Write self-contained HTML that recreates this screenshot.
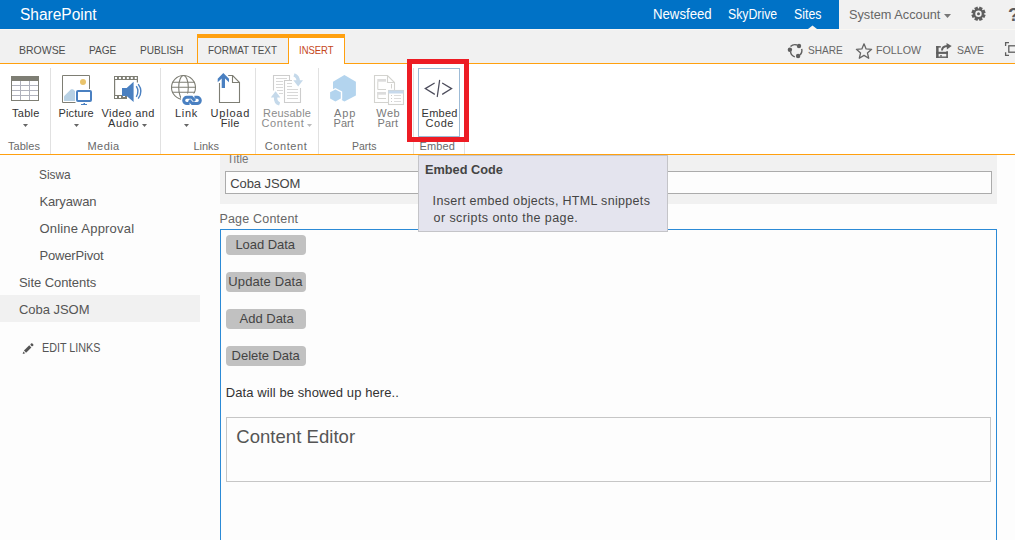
<!DOCTYPE html>
<html><head><meta charset="utf-8"><style>
html,body{margin:0;padding:0}
body{width:1015px;height:540px;overflow:hidden;position:relative;background:#fdfdfd;font-family:"Liberation Sans",sans-serif}
.t{position:absolute;white-space:nowrap;line-height:normal}
svg{display:block}
</style></head><body>
<div style="position:absolute;left:0px;top:0px;width:1015px;height:64px;background:#f1f1f1"></div><div style="position:absolute;left:0px;top:0px;width:839px;height:29px;background:#0072c6"></div><div style="position:absolute;left:0px;top:29px;width:1015px;height:1px;background:#f9f7f3"></div><svg style="position:absolute;left:808px;top:25px;" width="9" height="4" viewBox="0 0 9 4"><polygon points="0,4 4.5,0.5 9,4" fill="#f7f5f1"/></svg><div style="position:absolute;left:220px;top:155px;width:777px;height:49px;background:#f1f1f1"></div><div class="t" style="left:227.0px;top:151.0px;font-size:13px;font-weight:400;color:#777;transform:scaleX(0.8875);transform-origin:0 0">Title</div><div style="position:absolute;left:0px;top:64px;width:1015px;height:90px;background:#fff"></div><div style="position:absolute;left:0px;top:63px;width:1015px;height:1px;background:#ffa00f"></div><div style="position:absolute;left:0px;top:154px;width:1015px;height:1px;background:#ffa00f"></div><div style="position:absolute;left:197px;top:34px;width:148px;height:4px;background:#ffa00f"></div><div style="position:absolute;left:197px;top:34px;width:1px;height:30px;background:#ffa00f"></div><div style="position:absolute;left:344px;top:34px;width:1px;height:30px;background:#ffa00f"></div><div style="position:absolute;left:288px;top:38px;width:1px;height:26px;background:#ffa00f"></div><div style="position:absolute;left:289px;top:38px;width:55px;height:26px;background:#fff"></div><div style="position:absolute;left:50px;top:68px;width:1px;height:86px;background:#e1e1e1"></div><div style="position:absolute;left:160px;top:68px;width:1px;height:86px;background:#e1e1e1"></div><div style="position:absolute;left:255px;top:68px;width:1px;height:86px;background:#e1e1e1"></div><div style="position:absolute;left:318px;top:68px;width:1px;height:86px;background:#e1e1e1"></div><div style="position:absolute;left:413px;top:68px;width:1px;height:86px;background:#e1e1e1"></div><div style="position:absolute;left:464px;top:68px;width:1px;height:86px;background:#e1e1e1"></div><div style="position:absolute;left:0px;top:295px;width:200px;height:27px;background:#f1f1f1"></div><div style="position:absolute;left:225px;top:171px;width:767px;height:23px;box-sizing:border-box;border:1px solid #ababab;background:#fdfdfd"></div><div style="position:absolute;left:220px;top:229px;width:777px;height:320px;box-sizing:border-box;border:1px solid #2b8ad6;"></div><div style="position:absolute;left:226px;top:235px;width:80px;height:20px;background:#c1c1c1;border-radius:4px"></div><div style="position:absolute;left:226px;top:272px;width:80px;height:20px;background:#c1c1c1;border-radius:4px"></div><div style="position:absolute;left:226px;top:309px;width:80px;height:20px;background:#c1c1c1;border-radius:4px"></div><div style="position:absolute;left:226px;top:346px;width:80px;height:20px;background:#c1c1c1;border-radius:4px"></div><div style="position:absolute;left:226px;top:417px;width:765px;height:65px;box-sizing:border-box;border:1px solid #c6c6c6"></div><div class="t" style="left:19.53px;top:5.7px;font-size:16px;font-weight:400;color:#fff;transform:scaleX(0.9679);transform-origin:0 0">SharePoint</div><div class="t" style="left:653.46px;top:6.1px;font-size:14px;font-weight:400;color:#fff;transform:scaleX(0.9426);transform-origin:0 0">Newsfeed</div><div class="t" style="left:728.42px;top:6.1px;font-size:14px;font-weight:400;color:#fff;transform:scaleX(0.8764);transform-origin:0 0">SkyDrive</div><div class="t" style="left:794.42px;top:6.1px;font-size:14px;font-weight:400;color:#fff;transform:scaleX(0.88);transform-origin:0 0">Sites</div><div class="t" style="left:849.46px;top:7.0px;font-size:13.5px;font-weight:400;color:#666;transform:scaleX(0.9438);transform-origin:0 0">System Account</div><div class="t" style="left:19.29px;top:44.0px;font-size:11.5px;font-weight:400;color:#4e4e4e;transform:scaleX(0.912);transform-origin:0 0">BROWSE</div><div class="t" style="left:89.32px;top:44.0px;font-size:11.5px;font-weight:400;color:#4e4e4e;transform:scaleX(0.88);transform-origin:0 0">PAGE</div><div class="t" style="left:140.42px;top:44.0px;font-size:11.5px;font-weight:400;color:#4e4e4e;transform:scaleX(0.8812);transform-origin:0 0">PUBLISH</div><div class="t" style="left:207.54px;top:44.0px;font-size:11.5px;font-weight:400;color:#4e4e4e;transform:scaleX(0.8633);transform-origin:0 0">FORMAT TEXT</div><div class="t" style="left:298.88px;top:44.0px;font-size:11.5px;font-weight:400;color:#c5471a;transform:scaleX(0.822);transform-origin:0 0">INSERT</div><div class="t" style="left:807.62px;top:44.0px;font-size:11.5px;font-weight:400;color:#666;transform:scaleX(0.8763);transform-origin:0 0">SHARE</div><div class="t" style="left:876.27px;top:44.0px;font-size:11.5px;font-weight:400;color:#666;transform:scaleX(0.9271);transform-origin:0 0">FOLLOW</div><div class="t" style="left:956.69px;top:44.0px;font-size:11.5px;font-weight:400;color:#666;transform:scaleX(0.9071);transform-origin:0 0">SAVE</div><div class="t" style="left:12.0px;top:107.0px;font-size:11px;font-weight:400;color:#333;letter-spacing:0.275px">Table</div><div class="t" style="left:58.6px;top:107.0px;font-size:11px;font-weight:400;color:#333;letter-spacing:0.116px">Picture</div><div class="t" style="left:101.5px;top:107.0px;font-size:11px;font-weight:400;color:#333;letter-spacing:0.45px">Video and</div><div class="t" style="left:108.0px;top:116.5px;font-size:11px;font-weight:400;color:#333;letter-spacing:0.625px">Audio</div><div class="t" style="left:175.0px;top:107.0px;font-size:11px;font-weight:400;color:#333;letter-spacing:0.667px">Link</div><div class="t" style="left:210.5px;top:107.0px;font-size:11px;font-weight:400;color:#333;letter-spacing:0.8px">Upload</div><div class="t" style="left:220.7px;top:116.5px;font-size:11px;font-weight:400;color:#333;letter-spacing:0.333px">File</div><div class="t" style="left:263.0px;top:107.0px;font-size:11px;font-weight:400;color:#8c8c8c;letter-spacing:0.214px">Reusable</div><div class="t" style="left:261.4px;top:116.5px;font-size:11px;font-weight:400;color:#8c8c8c;letter-spacing:0.633px">Content</div><div class="t" style="left:334.0px;top:107.0px;font-size:11px;font-weight:400;color:#7a7a7a;letter-spacing:0.85px">App</div><div class="t" style="left:333.5px;top:116.5px;font-size:11px;font-weight:400;color:#7a7a7a;letter-spacing:0.066px">Part</div><div class="t" style="left:376.3px;top:107.0px;font-size:11px;font-weight:400;color:#7a7a7a;letter-spacing:0.45px">Web</div><div class="t" style="left:377.6px;top:116.5px;font-size:11px;font-weight:400;color:#7a7a7a;letter-spacing:0.099px">Part</div><div class="t" style="left:421.6px;top:107.0px;font-size:11px;font-weight:400;color:#333;letter-spacing:0.25px">Embed</div><div class="t" style="left:425.5px;top:116.5px;font-size:11px;font-weight:400;color:#333;letter-spacing:0.534px">Code</div><div class="t" style="left:8.0px;top:139.7px;font-size:11px;font-weight:400;color:#6a6a6a;letter-spacing:0.04px">Tables</div><div class="t" style="left:87.5px;top:139.7px;font-size:11px;font-weight:400;color:#6a6a6a;letter-spacing:0.425px">Media</div><div class="t" style="left:193.4px;top:139.7px;font-size:11px;font-weight:400;color:#6a6a6a;letter-spacing:0.0px">Links</div><div class="t" style="left:264.7px;top:139.7px;font-size:11px;font-weight:400;color:#6a6a6a;letter-spacing:0.599px">Content</div><div class="t" style="left:351.55px;top:139.7px;font-size:11px;font-weight:400;color:#6a6a6a;transform:scaleX(0.952);transform-origin:0 0">Parts</div><div class="t" style="left:419.6px;top:139.7px;font-size:11px;font-weight:400;color:#6a6a6a;letter-spacing:0.075px">Embed</div><div class="t" style="left:39.49px;top:167.0px;font-size:13px;font-weight:400;color:#555;transform:scaleX(0.9147);transform-origin:0 0">Siswa</div><div class="t" style="left:39.4px;top:194.0px;font-size:13px;font-weight:400;color:#555;letter-spacing:-0.101px">Karyawan</div><div class="t" style="left:39.4px;top:221.0px;font-size:13px;font-weight:400;color:#555;letter-spacing:0.207px">Online Approval</div><div class="t" style="left:39.4px;top:248.0px;font-size:13px;font-weight:400;color:#555;letter-spacing:-0.156px">PowerPivot</div><div class="t" style="left:19.0px;top:275.0px;font-size:13px;font-weight:400;color:#555;letter-spacing:-0.067px">Site Contents</div><div class="t" style="left:19.0px;top:302.0px;font-size:13px;font-weight:400;color:#555;letter-spacing:-0.036px">Coba JSOM</div><div class="t" style="left:41.7px;top:341.4px;font-size:12px;font-weight:400;color:#555;transform:scaleX(0.8969);transform-origin:0 0">EDIT LINKS</div><div class="t" style="left:230.3px;top:176.0px;font-size:13px;font-weight:400;color:#444;letter-spacing:-0.1px">Coba JSOM</div><div class="t" style="left:219.4px;top:211.6px;font-size:12.5px;font-weight:400;color:#666;letter-spacing:0.199px">Page Content</div><div class="t" style="left:235.4px;top:236.6px;font-size:13px;font-weight:400;color:#444;letter-spacing:-0.05px">Load Data</div><div class="t" style="left:228.3px;top:274.0px;font-size:13px;font-weight:400;color:#444;letter-spacing:0.12px">Update Data</div><div class="t" style="left:239.5px;top:310.8px;font-size:13px;font-weight:400;color:#444;letter-spacing:0.0px">Add Data</div><div class="t" style="left:231.6px;top:347.7px;font-size:13px;font-weight:400;color:#444;letter-spacing:-0.04px">Delete Data</div><div class="t" style="left:225.7px;top:385.0px;font-size:13px;font-weight:400;color:#333;letter-spacing:0.096px">Data will be showed up here..</div><div class="t" style="left:236.3px;top:425.8px;font-size:18.5px;font-weight:400;color:#555;letter-spacing:0.038px">Content Editor</div><svg style="position:absolute;left:23px;top:124px;" width="5" height="3" viewBox="0 0 5 3"><polygon points="0,0 5,0 2.5,3" fill="#666"/></svg><svg style="position:absolute;left:74px;top:124px;" width="5" height="3" viewBox="0 0 5 3"><polygon points="0,0 5,0 2.5,3" fill="#666"/></svg><svg style="position:absolute;left:142px;top:124px;" width="5" height="3" viewBox="0 0 5 3"><polygon points="0,0 5,0 2.5,3" fill="#666"/></svg><svg style="position:absolute;left:184px;top:124px;" width="5" height="3" viewBox="0 0 5 3"><polygon points="0,0 5,0 2.5,3" fill="#666"/></svg><svg style="position:absolute;left:307px;top:124px;" width="5" height="3" viewBox="0 0 5 3"><polygon points="0,0 5,0 2.5,3" fill="#bbb"/></svg><svg style="position:absolute;left:944px;top:14px;" width="7" height="4" viewBox="0 0 7 4"><polygon points="0,0 7,0 3.5,4" fill="#777"/></svg><svg style="position:absolute;left:11px;top:76px;" width="28" height="25" viewBox="0 0 28 25"><rect x="0.5" y="0.5" width="27" height="24" fill="#fff" stroke="#7e7e74"/><rect x="0" y="0" width="28" height="5" fill="#7e7e74"/><path d="M9.5 5V24M18.5 5V24M1 9.5H27M1 14.5H27M1 19.5H27" stroke="#b0b2bd" stroke-width="1"/></svg><svg style="position:absolute;left:60px;top:72px" width="36" height="36" viewBox="60 72 36 36"><path d="M75.5 102.5H62.5V75.5H89.5V89" fill="none" stroke="#7e7e74"/><circle cx="83" cy="81.9" r="3" fill="#eac46c"/><polygon points="64,101 64,96.3 71,89.2 73,89.2 75,91 75,101" fill="#b8d1e4"/><rect x="77" y="91" width="14" height="10" rx="1" fill="#fff" stroke="#4a80c1" stroke-width="2"/><rect x="81" y="104" width="6" height="1" fill="#4a80c1"/><rect x="83.5" y="103" width="1.5" height="1" fill="#4a80c1"/></svg><svg style="position:absolute;left:110px;top:72px" width="36" height="34" viewBox="110 72 36 34"><rect x="114" y="76" width="24" height="4" fill="#7e7e74"/><rect x="115.00" y="77" width="2" height="2" fill="#fff"/><rect x="118.95" y="77" width="2" height="2" fill="#fff"/><rect x="122.90" y="77" width="2" height="2" fill="#fff"/><rect x="126.85" y="77" width="2" height="2" fill="#fff"/><rect x="130.80" y="77" width="2" height="2" fill="#fff"/><rect x="134.75" y="77" width="2" height="2" fill="#fff"/><path d="M114.6 80V99M137.4 80V82.5" stroke="#7e7e74" stroke-width="1.2"/><rect x="114" y="95" width="13" height="4" fill="#7e7e74"/><rect x="115" y="96" width="2" height="2" fill="#fff"/><rect x="119" y="96" width="2" height="2" fill="#fff"/><rect x="123" y="96" width="2" height="1" fill="#fff"/><polygon points="122,88 126.7,88 133.6,81.8 133.6,101.9 126.7,95.9 122,95.9" fill="#4a80c1"/><path d="M136.3 86.2 Q139.6 91.5 136.3 96.8" fill="none" stroke="#4a80c1" stroke-width="1.4"/><path d="M138.2 84.2 Q143.6 91.5 138.2 98.7" fill="none" stroke="#4a80c1" stroke-width="1.4"/></svg><svg style="position:absolute;left:168px;top:72px" width="38" height="36" viewBox="168 72 38 36"><defs><clipPath id="gc"><polygon points="160,60 215,60 215,93.6 181,93.6 181,108 160,108"/></clipPath></defs><g clip-path="url(#gc)" fill="none" stroke="#7e7e74" stroke-width="1.1"><circle cx="183.5" cy="87.5" r="12"/><ellipse cx="183.5" cy="87.5" rx="4.8" ry="12"/><path d="M172 82.3H195M171.5 87.3H195.5M172 92.3H195"/></g><path d="M181 94.5H204V107H181Z" fill="#fff"/><g fill="none" stroke="#4a80c1" stroke-width="3"><path d="M195 100.9L191.7 97.3H186.8A3.1 3.1 0 0 0 186.8 103.5H189.6"/><path d="M189 100.1L192.3 103.5H197.2A3.1 3.1 0 0 0 197.2 97.3H194.4"/></g></svg><svg style="position:absolute;left:213px;top:70px" width="32" height="36" viewBox="213 70 32 36"><path d="M219.5 83V102.5H239.5V82.5L232.7 75.5H228.2M232.5 75.5V82.5H239.5" fill="none" stroke="#7e7e74" stroke-width="1.1"/><polygon points="223.3,73 229,78.7 229,82.3 225,78.4 225,88 221.7,88 221.7,78.4 217.7,82.3 217.7,78.7" fill="#4a80c1"/></svg><svg style="position:absolute;left:265px;top:68px" width="45" height="40" viewBox="265 68 45 40"><path d="M273.5 90.5V75.5H289.5V80" fill="none" stroke="#cdcdcd" stroke-width="1.1"/><path d="M276 78.5H287M276 81.5H283M276 84.5H283M276 87.5H283M277 90.5H283M279 93.5H283" stroke="#d4d4d4" stroke-width="0.9"/><path d="M292 80.5H284.5V102.5H300.5V87" fill="#fff" stroke="#cdcdcd" stroke-width="1.1"/><path d="M287 83.5H296" stroke="#d4d4d4" stroke-width="0.9"/><path d="M287 86.5H296" stroke="#d4d4d4" stroke-width="0.9"/><path d="M287 89.5H298" stroke="#d4d4d4" stroke-width="0.9"/><path d="M287 92.5H298" stroke="#d4d4d4" stroke-width="0.9"/><path d="M287 95.5H298" stroke="#d4d4d4" stroke-width="0.9"/><path d="M287 98.5H298" stroke="#d4d4d4" stroke-width="0.9"/><path d="M292 72.5H305V88H292Z" fill="#fff"/><path d="M294 74.8Q298.3 76.2 298.2 81.5" fill="none" stroke="#c5d9ea" stroke-width="3.4"/><polygon points="293.3,80.3 303,80.3 298.2,86.6" fill="#c5d9ea"/><path d="M279.6 104Q275.2 102.6 275.6 97" fill="none" stroke="#c5d9ea" stroke-width="3.4"/><polygon points="270.8,97.6 280.4,97.6 275.6,91.2" fill="#c5d9ea"/></svg><svg style="position:absolute;left:326px;top:72px" width="36" height="34" viewBox="326 72 36 34"><polygon points="344.4,75.1 355.9,81.8 355.9,95.6 344.4,101.6 333,95 333,81.8" fill="#b3d4ee"/><polygon points="335.4,88.1 342.2,91.5 342.2,99.4 335.4,103 328.7,99.4 328.7,91.5" fill="#fff"/><polygon points="335.4,89.6 340.8,92.3 340.8,98.6 335.4,101.6 330.1,98.6 330.1,92.3" fill="#b3d4ee"/></svg><svg style="position:absolute;left:370px;top:72px" width="38" height="36" viewBox="370 72 38 36"><path d="M388 102.5H374.5V75.5H387.5L394.5 82.5V90M387.5 75.5V82.5H394.5" fill="none" stroke="#d3d3cf" stroke-width="1.1"/><rect x="377.3" y="79" width="8.7" height="2.7" fill="#dcdcdc"/><path d="M377.8 81.5V89.5H386M377.8 92V98.5H386M391.5 84V88.5" fill="none" stroke="#d3d3cf" stroke-width="1"/><rect x="377.3" y="92" width="8.7" height="2.7" fill="#dcdcdc"/><rect x="388.5" y="90.5" width="15" height="14" fill="#fff" stroke="#d3d3cf" stroke-width="1.1"/><rect x="388.5" y="90.5" width="15" height="3" fill="#c7d9ec"/><rect x="391" y="95" width="1" height="1" fill="#ccc"/><path d="M394 95.5H401" stroke="#d8d8d8" stroke-width="0.9"/><rect x="391" y="98" width="1" height="1" fill="#ccc"/><path d="M394 98.5H401" stroke="#d8d8d8" stroke-width="0.9"/><rect x="391" y="101" width="1" height="1" fill="#ccc"/><path d="M394 101.5H401" stroke="#d8d8d8" stroke-width="0.9"/></svg><svg style="position:absolute;left:420px;top:76px" width="38" height="26" viewBox="420 76 38 26"><g fill="none" stroke="#4d4d5c" stroke-width="1.25" stroke-linecap="round"><path d="M434.2 83.2L425.3 88.6L434.4 94.1M442.6 83.2L451.6 88.6L442.6 94.1M439.6 80.3L437.3 96.5"/></g></svg><svg style="position:absolute;left:784px;top:40px" width="24" height="22" viewBox="784 40 24 22"><g fill="none" stroke="#5f5f5f" stroke-width="1.4"><path d="M790.5 46.6A6.3 6.3 0 0 1 797 45"/><path d="M801.7 48.8A6.3 6.3 0 0 1 799.8 55"/><path d="M794.8 56.8A6.3 6.3 0 0 1 790.5 51.5"/></g><circle cx="799" cy="46" r="2.2" fill="#5f5f5f"/><circle cx="789.9" cy="49.8" r="2.2" fill="#5f5f5f"/><circle cx="798.1" cy="56" r="2.2" fill="#5f5f5f"/></svg><svg style="position:absolute;left:852px;top:40px" width="24" height="22" viewBox="852 40 24 22"><polygon points="864.00,43.80 866.12,48.89 871.61,49.33 867.42,52.91 868.70,58.27 864.00,55.40 859.30,58.27 860.58,52.91 856.39,49.33 861.88,48.89" fill="none" stroke="#666" stroke-width="1.3" stroke-linejoin="round"/></svg><svg style="position:absolute;left:930px;top:40px" width="24" height="22" viewBox="930 40 24 22"><rect x="936.1" y="46.1" width="2.5" height="11.8" fill="#5f5f5f"/><rect x="936.1" y="46.1" width="4.7" height="1.5" fill="#5f5f5f"/><rect x="936.1" y="51.8" width="11.8" height="2.1" fill="#5f5f5f"/><rect x="946.3" y="51.2" width="1.6" height="6.7" fill="#5f5f5f"/><rect x="936.1" y="56.5" width="11.8" height="1.4" fill="#5f5f5f"/><rect x="940.2" y="55.1" width="1.6" height="1.5" fill="#5f5f5f"/><path d="M942 50.6Q942 46.3 947.5 46.1" fill="none" stroke="#5f5f5f" stroke-width="2"/><polygon points="946.5,42.9 951.7,46 946.9,49.6" fill="#5f5f5f"/></svg><svg style="position:absolute;left:966px;top:2px" width="30" height="26" viewBox="966 2 30 26"><rect x="976.8" y="6.7" width="3.4" height="3.2" fill="#5f5f5f" transform="rotate(22.5 978.5 13.8)"/><rect x="976.8" y="6.7" width="3.4" height="3.2" fill="#5f5f5f" transform="rotate(67.5 978.5 13.8)"/><rect x="976.8" y="6.7" width="3.4" height="3.2" fill="#5f5f5f" transform="rotate(112.5 978.5 13.8)"/><rect x="976.8" y="6.7" width="3.4" height="3.2" fill="#5f5f5f" transform="rotate(157.5 978.5 13.8)"/><rect x="976.8" y="6.7" width="3.4" height="3.2" fill="#5f5f5f" transform="rotate(202.5 978.5 13.8)"/><rect x="976.8" y="6.7" width="3.4" height="3.2" fill="#5f5f5f" transform="rotate(247.5 978.5 13.8)"/><rect x="976.8" y="6.7" width="3.4" height="3.2" fill="#5f5f5f" transform="rotate(292.5 978.5 13.8)"/><rect x="976.8" y="6.7" width="3.4" height="3.2" fill="#5f5f5f" transform="rotate(337.5 978.5 13.8)"/><circle cx="978.5" cy="13.8" r="5.4" fill="#5f5f5f"/><circle cx="978.5" cy="13.8" r="3.2" fill="#f1f1f1"/><circle cx="978.5" cy="13.8" r="1.5" fill="#5f5f5f"/></svg><div style="position:absolute;left:1008px;top:4px;font:700 19px 'Liberation Sans',sans-serif;color:#5c5c5c">?</div><svg style="position:absolute;left:1000px;top:38px" width="15" height="24" viewBox="1000 38 15 24"><path d="M1005.6 46V42.6H1009M1005.6 52.2V55.4H1009" fill="none" stroke="#5f5f5f" stroke-width="1.3"/><rect x="1008.8" y="45.8" width="10" height="6.4" fill="none" stroke="#5f5f5f" stroke-width="1.3"/></svg><svg style="position:absolute;left:18px;top:338px" width="22" height="20" viewBox="18 338 22 20"><g transform="translate(-1 0.7) rotate(-45 28.5 348.5)"><polygon points="21.7,348.5 24,347.2 24,349.8" fill="#555"/><rect x="25" y="347" width="7.5" height="3" fill="#555"/><rect x="33.5" y="347" width="2.5" height="3" rx="1" fill="#555"/></g></svg><div style="position:absolute;left:418px;top:68px;width:42px;height:69px;box-sizing:border-box;border:1px solid #9dbbd6"></div><div style="position:absolute;left:407px;top:59px;width:62px;height:83px;box-sizing:border-box;border:5px solid #ed1c24"></div><div style="position:absolute;left:418px;top:155px;width:250px;height:77px;box-sizing:border-box;border:1px solid #c4c4c8;background:#e4e4ee"></div><div class="t" style="left:424.66px;top:161.75px;font-size:13.5px;font-weight:700;color:#444;transform:scaleX(0.9432);transform-origin:0 0">Embed Code</div><div class="t" style="left:432.6px;top:194.0px;font-size:12.5px;font-weight:400;color:#444;letter-spacing:0.315px">Insert embed objects, HTML snippets</div><div class="t" style="left:433.6px;top:211.0px;font-size:12.5px;font-weight:400;color:#444;letter-spacing:0.42px">or scripts onto the page.</div>
</body></html>
